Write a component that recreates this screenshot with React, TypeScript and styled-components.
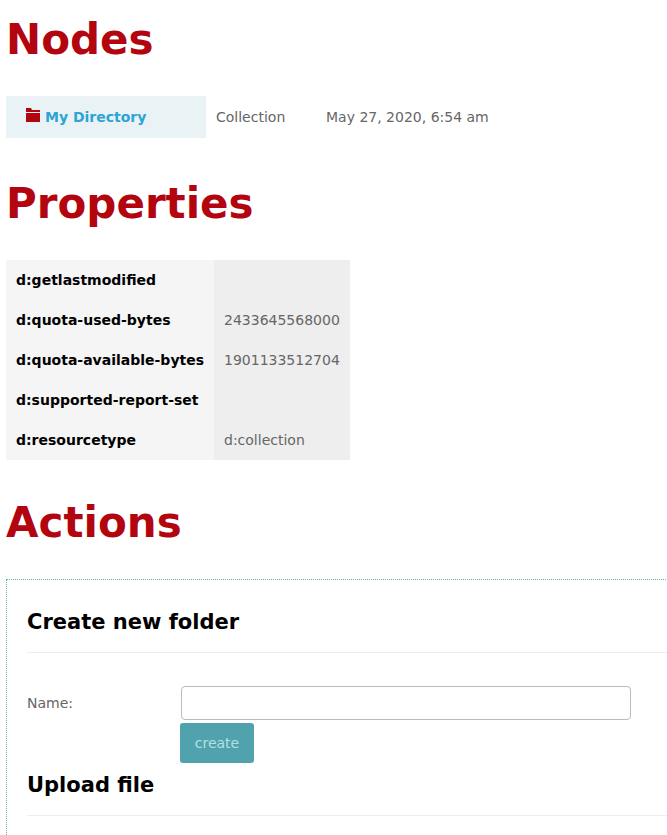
import React from 'react'
import styled, { createGlobalStyle } from 'styled-components';

const GlobalStyle = createGlobalStyle`
  html, body {
    margin: 0;
    padding: 0;
    height: 835px;
    overflow: hidden;
    background: #fff;
    font-family: "DejaVu Sans", sans-serif;
    font-size: 14px;
    color: #666;
  }
`;

const Page = styled.div`
  padding: 0 0 0 6px;
`;

const Heading = styled.h1`
  margin: 0;
  height: 80px;
  line-height: 80px;
  font-size: 42px;
  font-weight: 700;
  color: #b3050f;
`;

const NodeRow = styled.div`
  display: flex;
  align-items: center;
  height: 42px;
  margin-top: 16px;
  margin-bottom: 26px;
`;

const NameCell = styled.div`
  display: flex;
  align-items: center;
  gap: 5px;
  box-sizing: border-box;
  width: 200px;
  height: 100%;
  padding-left: 20px;
  background: #e9f3f5;
`;

const FolderGlyph = styled.svg`
  margin-bottom: 4px;
`;

const NodeLink = styled.a`
  font-weight: 700;
  color: #2ea3d6;
`;

const NodeCell = styled.div<{ $width: number }>`
  width: ${(p) => p.$width}px;
  padding-left: 10px;
  box-sizing: border-box;
  color: #666;
`;

const PropertyTable = styled.div`
  display: grid;
  grid-template-columns: 208px 136px;
  grid-auto-rows: 40px;
  width: 344px;
  margin-top: 16px;
  margin-bottom: 23px;
`;

const PropertyName = styled.div`
  display: flex;
  align-items: center;
  padding-left: 10px;
  background: #f5f5f5;
  font-weight: 700;
  color: #000;
`;

const PropertyValue = styled.div`
  display: flex;
  align-items: center;
  padding-left: 10px;
  background: #eee;
`;

const ActionPanel = styled.section`
  box-sizing: border-box;
  width: 800px;
  height: 300px;
  margin-top: 16px;
  padding: 21px 20px;
  border: 1px dotted #5fb5a0;
`;

const ActionTitle = styled.h3`
  margin: 0;
  height: 52px;
  line-height: 42px;
  box-sizing: border-box;
  font-size: 21px;
  font-weight: 700;
  color: #000;
  border-bottom: 1px solid #eee;
`;

const UploadTitle = styled(ActionTitle)`
  margin-top: 1px;
`;

const FormRow = styled.div`
  display: flex;
  align-items: center;
  margin-top: 33px;
`;

const FieldLabel = styled.label`
  width: 154px;
  color: #666;
`;

const TextInput = styled.input`
  box-sizing: border-box;
  width: 450px;
  height: 34px;
  border: 1px solid #bbb;
  border-radius: 4px;
  background: #fff;
`;

const SubmitButton = styled.button`
  display: block;
  width: 74px;
  height: 40px;
  margin: 3px 0 0 153px;
  border: 0;
  border-radius: 3px;
  background: #50a3ad;
  color: #b5e0e0;
  font-family: inherit;
  font-size: 14px;
`;

const properties = [
  { name: 'd:getlastmodified', value: '' },
  { name: 'd:quota-used-bytes', value: '2433645568000' },
  { name: 'd:quota-available-bytes', value: '1901133512704' },
  { name: 'd:supported-report-set', value: '' },
  { name: 'd:resourcetype', value: 'd:collection' },
];

const FolderIcon = () => (
  <FolderGlyph width="14" height="14" viewBox="0 0 14 14">
    <path d="M0 0h5l1 2h8v2H0z" fill="#b3050f" />
    <path d="M0 5h14v9H0z" fill="#b3050f" />
  </FolderGlyph>
);

const App = () => (
  <Page>
    <GlobalStyle />
    <Heading>Nodes</Heading>
    <NodeRow>
      <NameCell>
        <FolderIcon />
        <NodeLink>My Directory</NodeLink>
      </NameCell>
      <NodeCell $width={110}>Collection</NodeCell>
      <NodeCell $width={200}>May 27, 2020, 6:54 am</NodeCell>
    </NodeRow>
    <Heading>Properties</Heading>
    <PropertyTable>
      {properties.map((p) => (
        <React.Fragment key={p.name}>
          <PropertyName>{p.name}</PropertyName>
          <PropertyValue>{p.value}</PropertyValue>
        </React.Fragment>
      ))}
    </PropertyTable>
    <Heading>Actions</Heading>
    <ActionPanel>
      <ActionTitle>Create new folder</ActionTitle>
      <FormRow>
        <FieldLabel>Name:</FieldLabel>
        <TextInput />
      </FormRow>
      <SubmitButton>create</SubmitButton>
      <UploadTitle>Upload file</UploadTitle>
    </ActionPanel>
  </Page>
);

export default App
